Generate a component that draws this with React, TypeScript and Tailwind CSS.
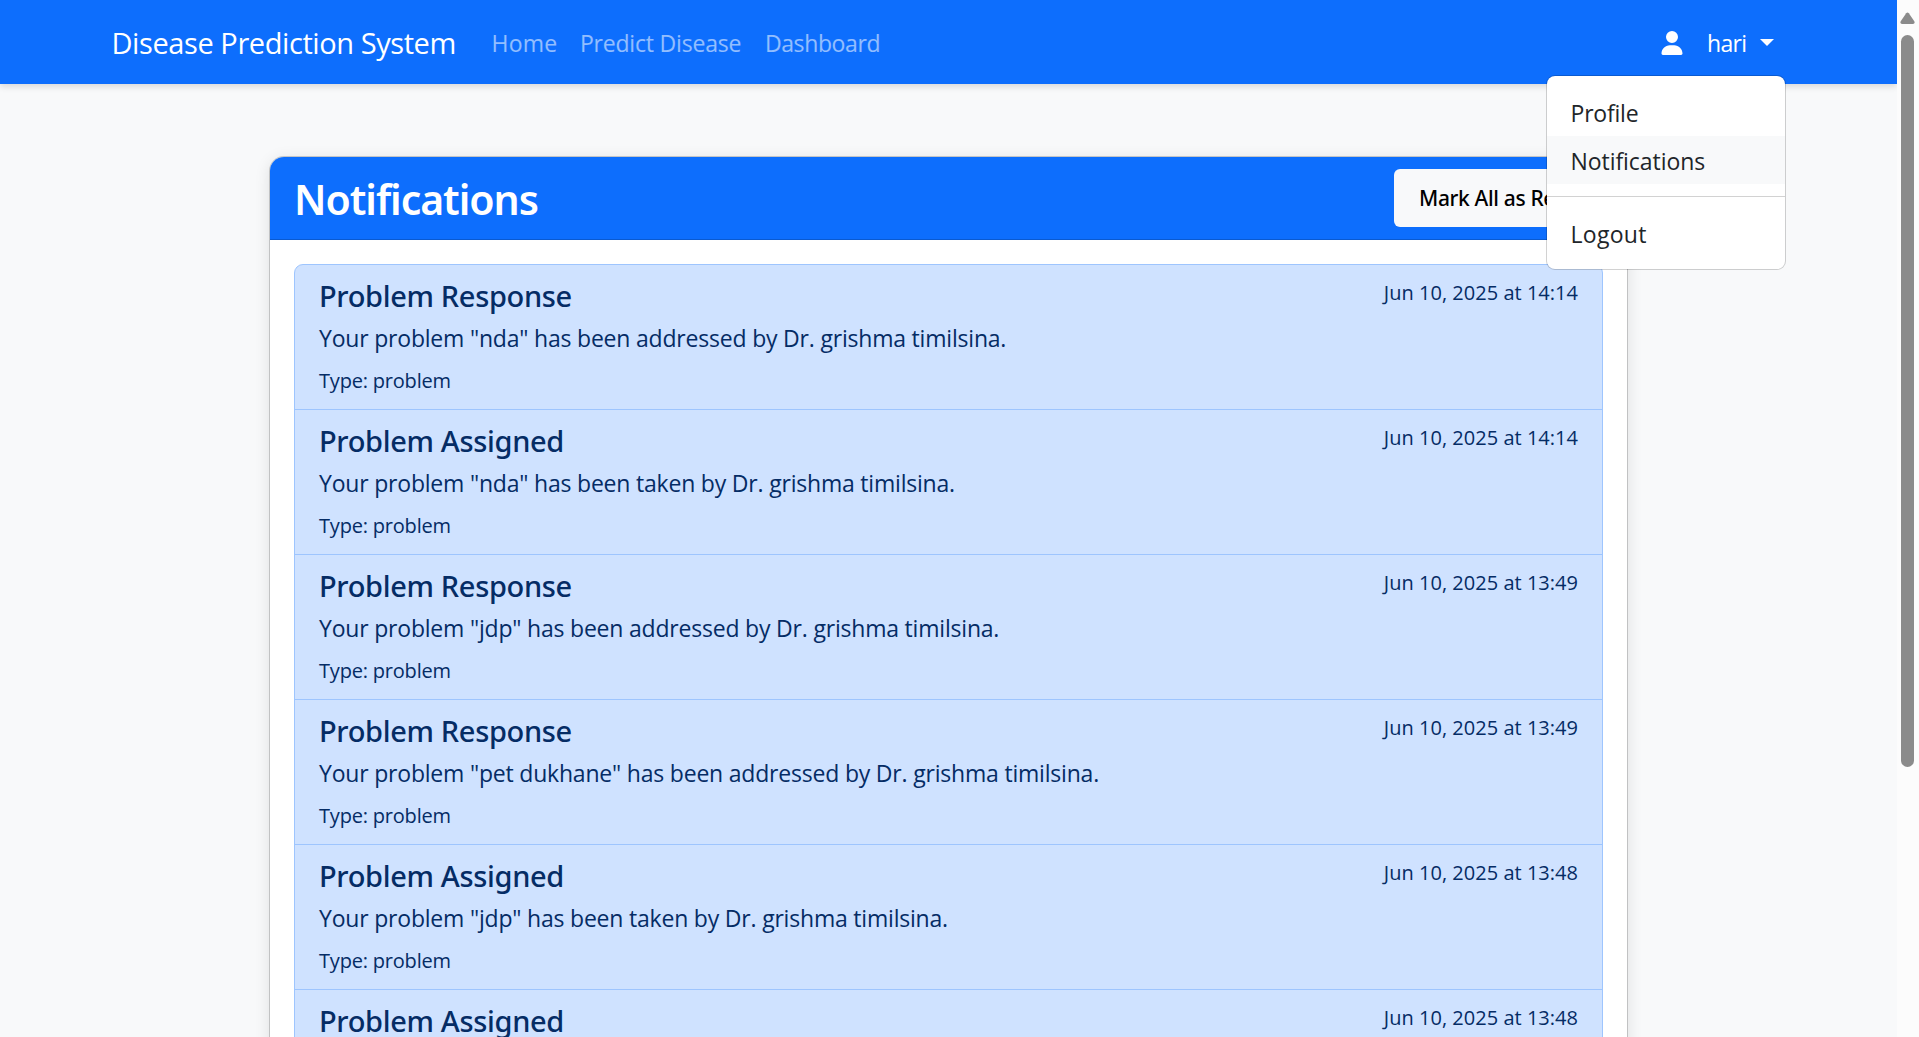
import React from "react";
import { FaUser } from "react-icons/fa6";

type Notification = { title: string; message: string; date: string };

const notifications: Notification[] = [
  { title: "Problem Response", message: 'Your problem "nda" has been addressed by Dr. grishma timilsina.', date: "Jun 10, 2025 at 14:14" },
  { title: "Problem Assigned", message: 'Your problem "nda" has been taken by Dr. grishma timilsina.', date: "Jun 10, 2025 at 14:14" },
  { title: "Problem Response", message: 'Your problem "jdp" has been addressed by Dr. grishma timilsina.', date: "Jun 10, 2025 at 13:49" },
  { title: "Problem Response", message: 'Your problem "pet dukhane" has been addressed by Dr. grishma timilsina.', date: "Jun 10, 2025 at 13:49" },
  { title: "Problem Assigned", message: 'Your problem "jdp" has been taken by Dr. grishma timilsina.', date: "Jun 10, 2025 at 13:48" },
  { title: "Problem Assigned", message: 'Your problem "jdp" has been taken by Dr. grishma timilsina.', date: "Jun 10, 2025 at 13:48" },
];

function UserMenu() {
  return (
    <div className="absolute left-[1546px] top-[75px] z-20 w-[240px] rounded-[9px] border border-black/[.175] bg-white bg-clip-padding py-[12px] text-[23px] leading-[50px] text-[#212529]">
      <a className="block h-[48px] pl-[23.5px] tracking-[-0.2px]">Profile</a>
      <a className="block h-[48px] bg-[#f8f9fa] pl-[23.5px] tracking-[-0.06px]">Notifications</a>
      <hr className="my-[12px] border-t border-black/[.175]" />
      <a className="block h-[48px] pl-[23.5px] tracking-[0.3px]">Logout</a>
    </div>
  );
}

function Navbar() {
  return (
    <nav className="relative z-10 flex h-[84px] items-center bg-[#0d6efd] pl-[111.5px] text-[23px] leading-[38px] text-white shadow-[0_3px_6px_rgba(0,0,0,0.12)]">
      <a className="w-[380px] whitespace-nowrap pt-[2px] text-[29px] tracking-[-0.42px]">Disease Prediction System</a>
      <a className="w-[88.4px] pt-[2px] tracking-[0.2px] text-white/55">Home</a>
      <a className="w-[185px] pt-[2px] tracking-[-0.195px] text-white/55">Predict Disease</a>
      <a className="pt-[2px] tracking-[-0.378px] text-white/55">Dashboard</a>
      <div className="ml-auto mr-[123px] flex items-center">
        <FaUser className="mt-[2px] h-[24px] w-[24px]" />
        <span className="ml-[23.5px] w-[53px] pt-[2px] tracking-[-0.7px]">hari</span>
        <span className="border-x-[7px] border-t-[7px] border-x-transparent border-t-white" />
      </div>
    </nav>
  );
}

function Item({ title, message, date }: Notification) {
  return (
    <li className="flex h-[145px] justify-between border-b border-[#9ec5fe] px-[24px] py-[12px]">
      <div>
        <h5 className="mb-[6px] h-[36px] font-['Noto_Sans',sans-serif] text-[29px] font-medium leading-[37px] tracking-[-0.34px]">{title}</h5>
        <p className="mb-[6px] h-[36px] text-[23px] leading-[38px] tracking-[-0.2px]">{message}</p>
        <p className="h-[36px] text-[20px] leading-[40px] tracking-[-0.2px]">Type: problem</p>
      </div>
      <span className="text-[20px] leading-[32px] tracking-[0.02px]">{date}</span>
    </li>
  );
}

function Scrollbar() {
  return (
    <aside className="flex w-[22px] flex-col items-center bg-[#fcfcfc] pr-[1px] pt-[12px]">
      <svg className="h-[12px] w-[15px]" viewBox="0 0 15 12" fill="#8b8b8b">
        <path d="M6.2 1.2Q7.5 0 8.8 1.2L14.3 9.2Q15.2 12 13 12H2Q-.2 12 .7 9.2Z" />
      </svg>
      <div className="mt-[11px] h-[732px] w-[13px] rounded-full bg-[#8b8b8b]" />
    </aside>
  );
}

export default function App() {
  return (
    <div className="flex h-[1037px] w-[1919px] overflow-hidden bg-[#f8f9fa] font-['Open_Sans','Noto_Sans',sans-serif]">
      <div className="relative h-full w-[1897px] overflow-hidden">
        <Navbar />
        <UserMenu />
        <main className="ml-[269px] mt-[72px] w-[1359px] rounded-[15px] border border-black/[.175] bg-white bg-clip-padding shadow-[0_3px_15px_rgba(0,0,0,0.1)]">
          <header className="flex h-[83px] items-center justify-between rounded-t-[14px] border-b border-black/[.175] bg-[#0d6efd] px-[24px]">
            <h2 className="whitespace-nowrap pt-[2px] font-['Noto_Sans',sans-serif] text-[41px] font-semibold leading-[53px] tracking-[-1.04px] text-white">Notifications</h2>
            <button className="h-[58px] w-[209px] whitespace-nowrap rounded-[6px] bg-[#f8f9fa] pl-[25px] pt-[1px] text-left font-['Noto_Sans',sans-serif] text-[21px] font-medium tracking-[-0.35px] text-black">Mark All as Read</button>
          </header>
          <ul className="mx-[24px] mt-[24px] overflow-hidden rounded-[9px] border border-[#9ec5fe] bg-[#cfe2ff] text-[#052c65]">
            {notifications.map((n, i) => (
              <Item key={i} {...n} />
            ))}
          </ul>
        </main>
      </div>
      <Scrollbar />
    </div>
  );
}
